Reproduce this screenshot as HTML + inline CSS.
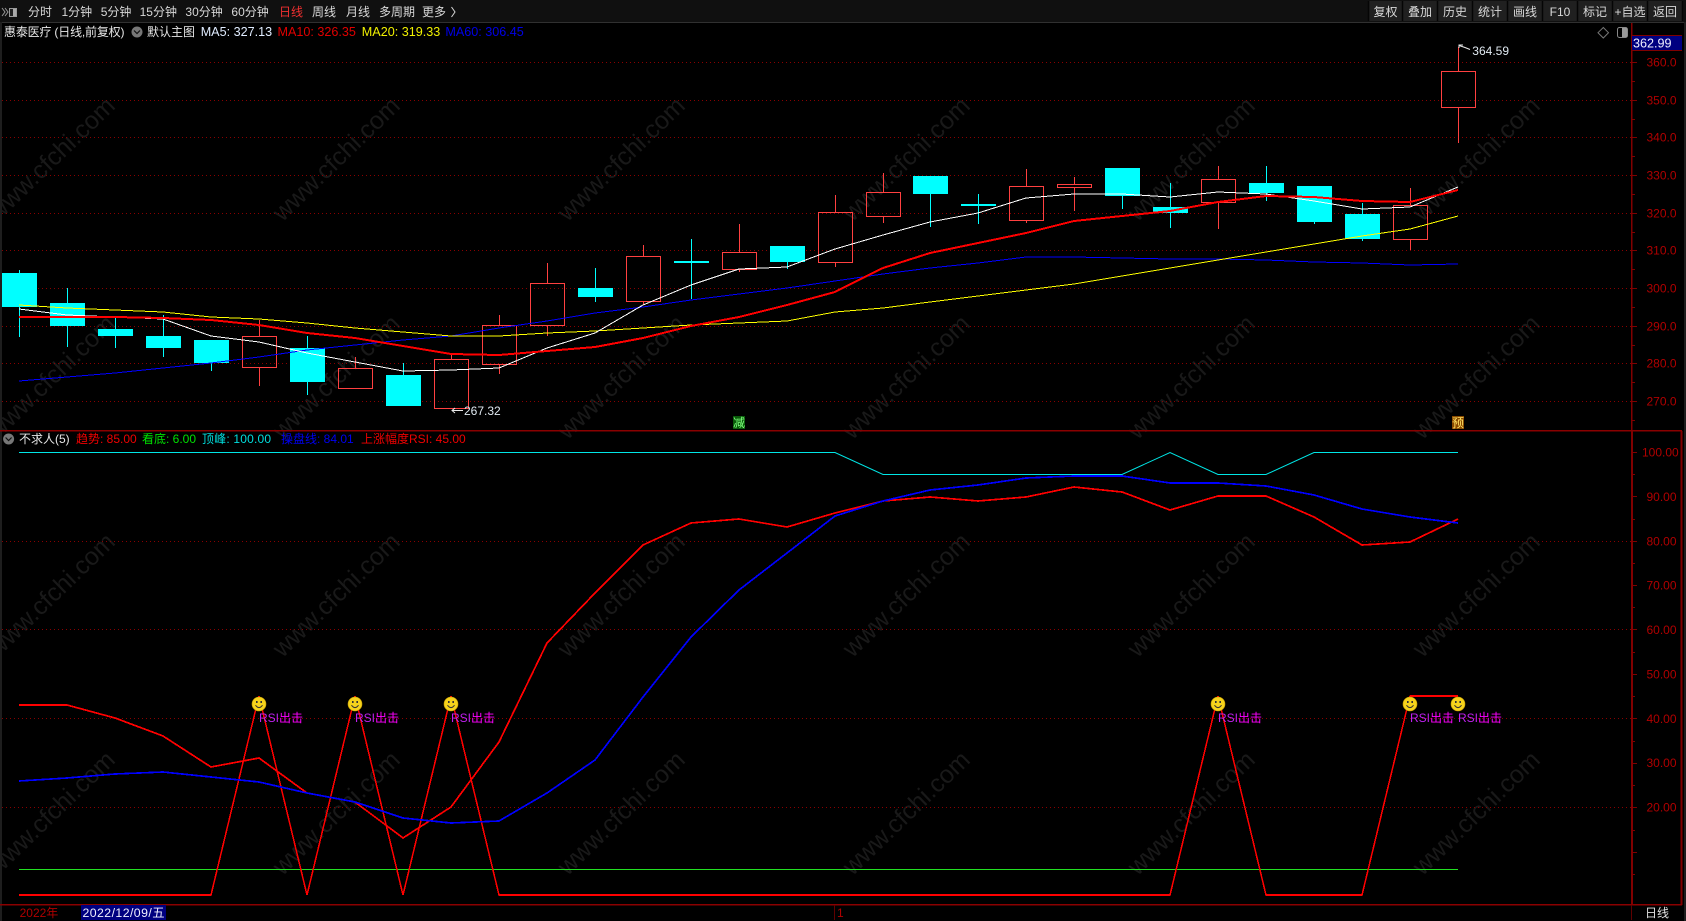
<!DOCTYPE html>
<html><head><meta charset="utf-8"><title>惠泰医疗</title>
<style>
html,body{margin:0;padding:0;background:#000;width:1686px;height:921px;overflow:hidden}
svg{display:block}
text{font-family:"Liberation Sans","Noto Sans CJK SC",sans-serif;font-size:12px}
.ax{fill:#b00000;font-size:12px}
.m{font-size:12.6px}
.wm text{font-size:25px;fill:#191919;text-anchor:middle}
.tb{fill:#d8d8d8;text-anchor:middle}
.l{fill:none;shape-rendering:crispEdges;stroke-linejoin:miter}
</style></head><body>
<svg xmlns="http://www.w3.org/2000/svg" width="1686" height="921" viewBox="0 0 1686 921">
<rect width="1686" height="921" fill="#000"/>

<!-- watermarks -->
<g class="wm">
<text transform="translate(57,165) rotate(-44)">www.cfchi.com</text><text transform="translate(342,165) rotate(-44)">www.cfchi.com</text><text transform="translate(627,165) rotate(-44)">www.cfchi.com</text><text transform="translate(912,165) rotate(-44)">www.cfchi.com</text><text transform="translate(1197,165) rotate(-44)">www.cfchi.com</text><text transform="translate(1482,165) rotate(-44)">www.cfchi.com</text>
<text transform="translate(57,383) rotate(-44)">www.cfchi.com</text><text transform="translate(342,383) rotate(-44)">www.cfchi.com</text><text transform="translate(627,383) rotate(-44)">www.cfchi.com</text><text transform="translate(912,383) rotate(-44)">www.cfchi.com</text><text transform="translate(1197,383) rotate(-44)">www.cfchi.com</text><text transform="translate(1482,383) rotate(-44)">www.cfchi.com</text>
<text transform="translate(57,601) rotate(-44)">www.cfchi.com</text><text transform="translate(342,601) rotate(-44)">www.cfchi.com</text><text transform="translate(627,601) rotate(-44)">www.cfchi.com</text><text transform="translate(912,601) rotate(-44)">www.cfchi.com</text><text transform="translate(1197,601) rotate(-44)">www.cfchi.com</text><text transform="translate(1482,601) rotate(-44)">www.cfchi.com</text>
<text transform="translate(57,819) rotate(-44)">www.cfchi.com</text><text transform="translate(342,819) rotate(-44)">www.cfchi.com</text><text transform="translate(627,819) rotate(-44)">www.cfchi.com</text><text transform="translate(912,819) rotate(-44)">www.cfchi.com</text><text transform="translate(1197,819) rotate(-44)">www.cfchi.com</text><text transform="translate(1482,819) rotate(-44)">www.cfchi.com</text>
</g>

<!-- top toolbar -->
<rect x="0" y="0" width="1686" height="22" fill="#101010"/>
<rect x="0" y="22" width="1686" height="1" fill="#303030"/>
<path d="M2 8l3 4-3 4M5 8l3 4-3 4" fill="none" stroke="#999" stroke-width="1"/>
<rect x="9.500" y="8.500" width="7" height="8" fill="#222" stroke="#999"/><rect x="13" y="9" width="3" height="7" fill="#aaa"/>
<g fill="#d8d8d8">
<text x="28" y="16">分时</text><text x="61.500" y="16">1分钟</text><text x="100.700" y="16">5分钟</text><text x="139.600" y="16">15分钟</text><text x="185.400" y="16">30分钟</text><text x="231.400" y="16">60分钟</text>
<text x="279" y="16" fill="#f03030">日线</text>
<text x="312" y="16">周线</text><text x="346" y="16">月线</text><text x="379" y="16">多周期</text><text x="422" y="16">更多</text>
</g>
<path d="M451.500 7l3.500 5-3.500 5" fill="none" stroke="#d8d8d8" stroke-width="1"/>
<!-- right buttons -->
<rect x="1368" y="1" width="314" height="20" fill="#202020"/>
<path d="M1368.500 1V21M1402.500 1V21M1437.500 1V21M1472.500 1V21M1507.500 1V21M1542.500 1V21M1577.500 1V21M1612.500 1V21M1647.500 1V21M1682.500 1V21" stroke="#050505" stroke-width="1.500" fill="none"/>
<g>
<text class="tb" x="1385.500" y="16">复权</text><text class="tb" x="1420" y="16">叠加</text><text class="tb" x="1455" y="16">历史</text><text class="tb" x="1490" y="16">统计</text><text class="tb" x="1525" y="16">画线</text><text class="tb" x="1560" y="16">F10</text><text class="tb" x="1595" y="16">标记</text><text class="tb" x="1630" y="16">+自选</text><text class="tb" x="1665" y="16">返回</text>
</g>

<!-- frame -->
<rect x="0" y="22" width="2" height="899" fill="#1e1e1e"/>
<rect x="1684" y="22" width="2" height="899" fill="#1e1e1e"/>

<!-- grid dotted -->
<g stroke="#8a0000" stroke-width="1" stroke-dasharray="1 3" fill="none" shape-rendering="crispEdges">
<path d="M2 62.500H1632M2 100.500H1632M2 137.500H1632M2 175.500H1632M2 213.500H1632M2 250.500H1632M2 288.500H1632M2 326.500H1632M2 363.500H1632M2 401.500H1632"/>
<path d="M2 541.500H1632M2 629.500H1632M2 718.500H1632M2 807.500H1632"/>
</g>

<!-- red wicks -->
<path stroke="#ff4040" stroke-width="1" fill="none" shape-rendering="crispEdges" d="M259.500 320V336M259.500 367V386M355.500 357V368M451.500 354V359M499.500 315V325M499.500 365V374M547.500 263V283M547.500 325V336M643.500 245V256M643.500 301V305M739.500 224V252M739.500 269V272M835.500 195V212M835.500 262V267M883.500 173V192M883.500 217V223M1026.500 169V186M1026.500 220V223M1074.500 177V184M1074.500 188V211M1218.500 166V179M1218.500 202V229M1410.500 188V205M1410.500 239V250M1458.500 47V71M1458.500 107V143"/>
<!-- cyan wicks -->
<path stroke="#00ffff" stroke-width="1" fill="none" shape-rendering="crispEdges" d="M19.500 270V337M67.500 288V347M115.500 318V348M163.500 315V357M211.500 340V371M307.500 336V395M403.500 363V376M595.500 268V302M691.500 239V299M787.500 262V269M930.500 194V227M978.500 194V224M1122.500 195V209M1170.500 183V228M1266.500 166V201M1314.500 221V224M1362.500 203V241"/>
<!-- cyan bodies -->
<g fill="#00ffff" shape-rendering="crispEdges">
<rect x="2" y="273" width="35" height="34"/><rect x="50" y="303" width="35" height="23"/><rect x="98" y="329" width="35" height="7"/><rect x="146" y="336" width="35" height="12"/><rect x="194" y="340" width="35" height="23"/><rect x="290" y="348" width="35" height="34"/><rect x="386" y="375" width="35" height="31"/><rect x="578" y="288" width="35" height="9"/><rect x="674" y="261" width="35" height="2"/><rect x="770" y="246" width="35" height="16"/><rect x="913" y="176" width="35" height="18"/><rect x="961" y="204" width="35" height="2"/><rect x="1105" y="168" width="35" height="28"/><rect x="1153" y="207" width="35" height="6"/><rect x="1249" y="183" width="35" height="10"/><rect x="1297" y="186" width="35" height="36"/><rect x="1345" y="214" width="35" height="25"/>
</g>
<!-- red bodies -->
<g fill="none" stroke="#ff4040" stroke-width="1" shape-rendering="crispEdges">
<rect x="242.500" y="336.500" width="34" height="31"/><rect x="338.500" y="368.500" width="34" height="20"/><rect x="434.500" y="359.500" width="34" height="49"/><rect x="482.500" y="325.500" width="34" height="39"/><rect x="530.500" y="283.500" width="34" height="42"/><rect x="626.500" y="256.500" width="34" height="45"/><rect x="722.500" y="252.500" width="34" height="17"/><rect x="818.500" y="212.500" width="34" height="50"/><rect x="866.500" y="192.500" width="34" height="24"/><rect x="1009.500" y="186.500" width="34" height="34"/><rect x="1057.500" y="184.500" width="34" height="3"/><rect x="1201.500" y="179.500" width="34" height="23"/><rect x="1393.500" y="205.500" width="34" height="34"/><rect x="1441.500" y="71.500" width="34" height="36"/>
</g>

<!-- MA lines -->
<polyline class="l" stroke="#0000ff" stroke-width="1" points="19,381 67,377 115,373 163,368 211,363 259,357 307,350 355,345 403,340 451,336 499,328 547,321 595,313 643,307 691,300 739,294 787,288 835,281 883,274 930,268 978,263 1026,257 1074,257 1122,258 1170,259 1218,259 1266,260 1314,262 1362,263 1410,265 1458,264"/>
<polyline class="l" stroke="#ffff00" stroke-width="1" points="19,305 67,308 115,310 163,312 211,317 259,319 307,323 355,328 403,332 451,336 499,336 547,333 595,331 643,328 691,325 739,323 787,321 835,312 883,308 930,302 978,296 1026,290 1074,284 1122,276 1170,268 1218,260 1266,252 1314,244 1362,236 1410,229 1458,216"/>
<polyline class="l" stroke="#ffffff" stroke-width="1" points="19,309 67,315 115,317 163,319 211,336 259,342 307,353 355,362 403,371 451,370 499,368 547,348 595,333 643,305 691,285 739,269 787,267 835,249 883,235 930,222 978,213 1026,198 1074,194 1122,194 1170,197 1218,192 1266,194 1314,201 1362,209 1410,207 1458,187"/>
<polyline class="l" stroke="#ff0000" stroke-width="2" points="19,317 67,317 115,317 163,318 211,320 259,325 307,333 355,338 403,346 451,354 499,355 547,351 595,347 643,338 691,326 739,317 787,305 835,292 883,268 930,253 978,243 1026,233 1074,221 1122,216 1170,211 1218,202 1266,196 1314,197 1362,201 1410,202 1458,190"/>

<!-- main labels -->
<g fill="#dfe8f0">
<text x="464" y="415">267.32</text>
<text x="1472.300" y="55">364.59</text>
</g>
<path d="M463 410.500H452M455 408l-3 2.500 3 2.500" fill="none" stroke="#e8e8e8" stroke-width="1"/>
<path d="M1470 49.500l-5-2-6-2M1463 45h-4v3" fill="none" stroke="#e8e8e8" stroke-width="1"/>
<rect x="733" y="416" width="12" height="13" fill="#0a5a0a"/>
<text x="733" y="427" style="font-size:12px" fill="#7fff7f">减</text>
<rect x="1452" y="416" width="12" height="13" fill="#8a4a00"/>
<text x="1452" y="427" style="font-size:12px" fill="#ffe060">预</text>

<!-- header row -->
<text x="4" y="36" fill="#e6e6e6" textLength="120.500">惠泰医疗 (日线,前复权)</text>
<circle cx="137" cy="32" r="5.500" fill="#777"/><path d="M134 30.500l3 3 3-3" fill="none" stroke="#111" stroke-width="1.200"/>
<text x="147" y="36" fill="#e6e6e6">默认主图</text>
<text class="m" x="200.700" y="36" fill="#e0ecff">MA5: 327.13</text>
<text class="m" x="277.500" y="36" fill="#e00000">MA10: 326.35</text>
<text class="m" x="361.800" y="36" fill="#f0f000">MA20: 319.33</text>
<text class="m" x="445.400" y="36" fill="#0000e8">MA60: 306.45</text>
<polygon points="1603.300,27.500 1608.500,32.700 1603.300,38 1598,32.700" fill="none" stroke="#777" stroke-width="1"/>
<rect x="1617.500" y="27.500" width="10" height="10" rx="2" fill="none" stroke="#888"/><rect x="1622" y="28" width="5" height="9" fill="#999"/>

<!-- axis -->
<rect x="1631" y="23" width="1.500" height="881" fill="#800000"/>
<rect x="1632" y="35" width="50" height="16" fill="#000080"/>
<rect x="1632" y="35" width="50" height="1" fill="#800000"/><rect x="1632" y="50" width="50" height="1" fill="#800000"/>
<text x="1633" y="47.500" fill="#f0f0ff" style="font-size:12.600px">362.99</text>
<path d="M1632 62.500h5M1632 81.500h3M1632 100.500h5M1632 119.500h3M1632 137.500h5M1632 156.500h3M1632 175.500h5M1632 194.500h3M1632 213.500h5M1632 232.500h3M1632 250.500h5M1632 269.500h3M1632 288.500h5M1632 307.500h3M1632 326.500h5M1632 345.500h3M1632 363.500h5M1632 382.500h3M1632 401.500h5M1632 420.500h3" stroke="#800000" stroke-width="1" fill="none" shape-rendering="crispEdges"/>
<g class="ax">
<text x="1646.500" y="66.500">360.0</text><text x="1646.500" y="104.500">350.0</text><text x="1646.500" y="141.500">340.0</text><text x="1646.500" y="179.500">330.0</text><text x="1646.500" y="217.500">320.0</text><text x="1646.500" y="254.500">310.0</text><text x="1646.500" y="292.500">300.0</text><text x="1646.500" y="330.500">290.0</text><text x="1646.500" y="367.500">280.0</text><text x="1646.500" y="405.500">270.0</text>
</g>

<!-- divider -->
<rect x="0" y="430" width="1682" height="1.500" fill="#8a0000"/>

<!-- lower header -->
<circle cx="8.600" cy="439" r="5.500" fill="#777"/><path d="M5.600 437.500l3 3 3-3" fill="none" stroke="#111" stroke-width="1.200"/>
<text x="19" y="443" fill="#e6e6e6">不求人(5)</text>
<text x="76" y="443" fill="#f00000">趋势: 85.00</text>
<text x="142" y="443" fill="#00e000">看底: 6.00</text>
<text x="202" y="443" fill="#00dede" textLength="69">顶峰: 100.00</text>
<text x="281" y="443" fill="#0000f0">操盘线: 84.01</text>
<text x="361" y="443" fill="#f00000">上涨幅度RSI: 45.00</text>

<!-- lower lines -->
<rect x="19" y="869" width="1439" height="1" fill="#22e022"/>
<polyline fill="none" stroke="#00e6e6" stroke-width="1" points="19,452.500 835,452.500 883,474.500 1122,474.500 1170,452.500 1218,474.500 1266,474.500 1314,452.500 1458,452.500"/>
<polyline class="l" stroke="#ff0000" stroke-width="1.500" points="19,895 211,895 259,696 307,895 355,696 403,895 451,696 499,895 1170,895 1218,696 1266,895 1362,895 1410,696 1458,696"/>
<path d="M19 894h192v2H19zM499 894h671v2H499zM1266 894h96v2h-96zM1410 695h48v2h-48z" fill="#ff0000" shape-rendering="crispEdges"/>
<polyline class="l" stroke="#ff0000" stroke-width="1.700" points="19,705 67,705 115,718 163,736 211,767 259,758 307,793 355,802 403,838 451,807 499,742 547,643 595,593 643,545 691,523 739,519 787,527 835,513 883,501 930,497 978,501 1026,497 1074,487 1122,492 1170,510 1218,496 1266,496 1314,517 1362,545 1410,542 1458,519"/>
<polyline class="l" stroke="#0000ff" stroke-width="1.700" points="19,781 67,778 115,774 163,772 211,777 259,782 307,793 355,802 403,818 451,823 499,821 547,793 595,760 643,697 691,637 739,590 787,553 835,516 883,501 930,490 978,485 1026,478 1074,476 1122,476 1170,483 1218,483 1266,486 1314,495 1362,509 1410,517 1458,523"/>

<!-- smileys -->
<defs>
<g id="smile">
<circle cx="0" cy="0" r="7" fill="#f6d31c" stroke="#c8a000" stroke-width=".6"/>
<rect x="-3" y="-3" width="1.600" height="2" fill="#333"/><rect x="1.400" y="-3" width="1.600" height="2" fill="#333"/>
<path d="M-3.500 1.200Q0 6 3.500 1.200" fill="none" stroke="#333" stroke-width="1"/>
</g>
</defs>
<use href="#smile" x="259" y="704"/><use href="#smile" x="355" y="704"/><use href="#smile" x="451" y="704"/><use href="#smile" x="1218" y="704"/><use href="#smile" x="1410" y="704"/><use href="#smile" x="1458" y="704"/>
<g>
<text x="259" y="722"><tspan fill="#c020f0">RSI</tspan><tspan fill="#ff00ff">出击</tspan></text>
<text x="355" y="722"><tspan fill="#c020f0">RSI</tspan><tspan fill="#ff00ff">出击</tspan></text>
<text x="451" y="722"><tspan fill="#c020f0">RSI</tspan><tspan fill="#ff00ff">出击</tspan></text>
<text x="1218" y="722"><tspan fill="#c020f0">RSI</tspan><tspan fill="#ff00ff">出击</tspan></text>
<text x="1410" y="722"><tspan fill="#c020f0">RSI</tspan><tspan fill="#ff00ff">出击</tspan></text>
<text x="1458" y="722"><tspan fill="#c020f0">RSI</tspan><tspan fill="#ff00ff">出击</tspan></text>
</g>

<!-- lower axis -->
<rect x="1631" y="431" width="2" height="473" fill="#800000"/>
<rect x="1680.500" y="431" width="2" height="474" fill="#800000"/>
<path d="M1633 452.500h4M1633 474.500h2M1633 496.500h4M1633 519.500h2M1633 541.500h4M1633 563.500h2M1633 585.500h4M1633 607.500h2M1633 629.500h4M1633 652.500h2M1633 674.500h4M1633 696.500h2M1633 718.500h4M1633 741.500h2M1633 763.500h4M1633 785.500h2M1633 807.500h4M1633 830.500h2M1633 852.500h4M1633 874.500h2" stroke="#800000" stroke-width="1" fill="none" shape-rendering="crispEdges"/>
<g class="ax">
<text x="1642" y="456.500">100.00</text><text x="1646.500" y="501">90.00</text><text x="1646.500" y="545.500">80.00</text><text x="1646.500" y="589.500">70.00</text><text x="1646.500" y="634">60.00</text><text x="1646.500" y="678.500">50.00</text><text x="1646.500" y="723">40.00</text><text x="1646.500" y="767">30.00</text><text x="1646.500" y="811.500">20.00</text>
</g>

<!-- bottom row -->
<rect x="0" y="904" width="1682" height="1.500" fill="#8a0000"/>
<rect x="81" y="905" width="85" height="15" fill="#000080"/>
<text x="82.500" y="917" fill="#f0f0ff" style="font-size:12.300px" textLength="82">2022/12/09/五</text>
<text x="19.600" y="917" fill="#b00000">2022年</text>
<rect x="834" y="905" width="1" height="15" fill="#600000"/>
<text x="837" y="917" fill="#b00000">1</text>
<rect x="1631" y="905" width="1" height="15" fill="#600000"/>
<text x="1645" y="917" fill="#e0e0e0">日线</text>
</svg>
</body></html>
